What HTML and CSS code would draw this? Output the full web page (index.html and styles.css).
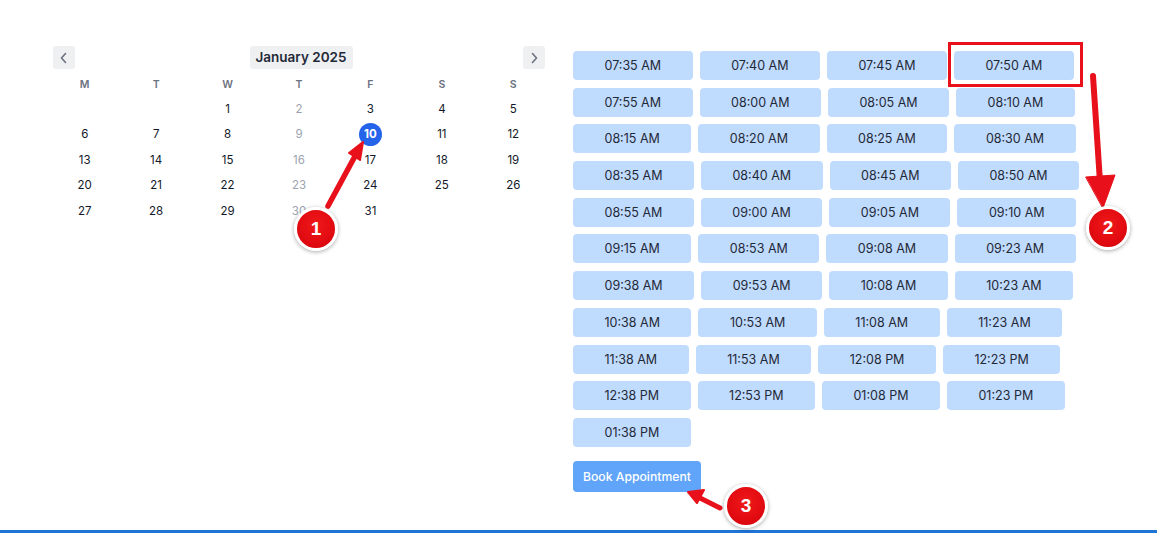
FILE: index.html
```html
<!DOCTYPE html>
<html>
<head>
<meta charset="utf-8">
<link rel="stylesheet" href="styles.css">
</head>
<body>
<div class="page">
  <div class="calendar">
    <div class="cal-nav">
      <button class="nav-btn" aria-label="Previous month">
        <svg width="10" height="12" viewBox="0 0 10 12"><path d="M6.5 1.5 L2.5 6 L6.5 10.5" fill="none" stroke="#6b7280" stroke-width="1.6" stroke-linecap="round" stroke-linejoin="round"/></svg>
      </button>
      <div class="cal-title">January 2025</div>
      <button class="nav-btn" aria-label="Next month">
        <svg width="10" height="12" viewBox="0 0 10 12"><path d="M3.5 1.5 L7.5 6 L3.5 10.5" fill="none" stroke="#6b7280" stroke-width="1.6" stroke-linecap="round" stroke-linejoin="round"/></svg>
      </button>
    </div>
    <div class="cal-grid">
      <div class="dow">M</div><div class="dow">T</div><div class="dow">W</div><div class="dow">T</div><div class="dow">F</div><div class="dow">S</div><div class="dow">S</div>
      <div class="day"></div><div class="day"></div><div class="day">1</div><div class="day off">2</div><div class="day">3</div><div class="day">4</div><div class="day">5</div>
      <div class="day">6</div><div class="day">7</div><div class="day">8</div><div class="day off">9</div><div class="day"><span class="sel">10</span></div><div class="day">11</div><div class="day">12</div>
      <div class="day">13</div><div class="day">14</div><div class="day">15</div><div class="day off">16</div><div class="day">17</div><div class="day">18</div><div class="day">19</div>
      <div class="day">20</div><div class="day">21</div><div class="day">22</div><div class="day off">23</div><div class="day">24</div><div class="day">25</div><div class="day">26</div>
      <div class="day">27</div><div class="day">28</div><div class="day">29</div><div class="day off">30</div><div class="day">31</div><div class="day"></div><div class="day"></div>
    </div>
  </div>
  <div class="slots-col">
    <div class="slots">
      <button class="slot">07:35 AM</button><button class="slot">07:40 AM</button><button class="slot">07:45 AM</button><button class="slot">07:50 AM</button>
      <button class="slot">07:55 AM</button><button class="slot">08:00 AM</button><button class="slot">08:05 AM</button><button class="slot">08:10 AM</button>
      <button class="slot">08:15 AM</button><button class="slot">08:20 AM</button><button class="slot">08:25 AM</button><button class="slot">08:30 AM</button>
      <button class="slot">08:35 AM</button><button class="slot">08:40 AM</button><button class="slot">08:45 AM</button><button class="slot">08:50 AM</button>
      <button class="slot">08:55 AM</button><button class="slot">09:00 AM</button><button class="slot">09:05 AM</button><button class="slot">09:10 AM</button>
      <button class="slot">09:15 AM</button><button class="slot">08:53 AM</button><button class="slot">09:08 AM</button><button class="slot">09:23 AM</button>
      <button class="slot">09:38 AM</button><button class="slot">09:53 AM</button><button class="slot">10:08 AM</button><button class="slot">10:23 AM</button>
      <button class="slot">10:38 AM</button><button class="slot">10:53 AM</button><button class="slot">11:08 AM</button><button class="slot">11:23 AM</button>
      <button class="slot">11:38 AM</button><button class="slot">11:53 AM</button><button class="slot">12:08 PM</button><button class="slot">12:23 PM</button>
      <button class="slot">12:38 PM</button><button class="slot">12:53 PM</button><button class="slot">01:08 PM</button><button class="slot">01:23 PM</button>
      <button class="slot">01:38 PM</button>
    </div>
    <button class="book">Book Appointment</button>
  </div>
</div>
<div class="bottom-line"></div>

<svg class="arrows" width="1157" height="533" viewBox="0 0 1157 533">
  <g fill="#e8101a" stroke="#e8101a" stroke-linecap="round">
    <line x1="328" y1="206" x2="354" y2="158" stroke-width="5.5"/>
    <polygon points="363,142 349,153 360,160" stroke-width="2" stroke-linejoin="round"/>
    <line x1="1093" y1="76" x2="1100" y2="182" stroke-width="6"/>
    <polygon points="1086,177 1115,175 1103,208" stroke-width="1" stroke-linejoin="round"/>
    <line x1="720" y1="508" x2="698" y2="497" stroke-width="5"/>
    <polygon points="688,492 704,490 697,503" stroke-width="2" stroke-linejoin="round"/>
  </g>
</svg>
<div class="highlight-box"></div>
<div class="badge b1">1</div>
<div class="badge b2">2</div>
<div class="badge b3">3</div>
</body>
</html>
```

FILE: styles.css
```css
* { box-sizing: border-box; }
html, body {
  margin: 0;
  padding: 0;
  background: #ffffff;
  font-family: Inter, "Noto Sans", "Liberation Sans", sans-serif;
  color: #1f2937;
}
body {
  width: 1157px;
  height: 533px;
  position: relative;
  overflow: hidden;
}
.page {
  display: flex;
  gap: 24px;
  padding: 46px 0 0 49px;
}
.calendar {
  width: 500px;
  flex: none;
}
.cal-nav {
  display: flex;
  align-items: center;
  justify-content: space-between;
  margin: 0 4px;
  height: 23px;
}
.nav-btn {
  width: 22px;
  height: 23px;
  border: none;
  border-radius: 3px;
  background: #eff0f2;
  padding: 0;
  display: flex;
  align-items: center;
  justify-content: center;
}
.cal-title {
  height: 23px;
  line-height: 23px;
  padding: 0 6px;
  background: #eff0f2;
  border-radius: 3px;
  font-size: 13.5px;
  font-weight: 600;
  color: #1f2937;
  margin-left: 4px;
}
.cal-grid {
  display: grid;
  grid-template-columns: repeat(7, 1fr);
  margin-top: 5px;
}
.dow {
  height: 22px;
  line-height: 22px;
  text-align: center;
  font-size: 10.5px;
  font-weight: 600;
  color: #6b7280;
}
.day {
  height: 25.5px;
  display: flex;
  align-items: center;
  justify-content: center;
  font-size: 11.5px;
  color: #111827;
}
.day.off { color: #9ca3af; }
.sel {
  width: 23px;
  height: 23px;
  border-radius: 50%;
  background: #2563eb;
  color: #ffffff;
  font-weight: 700;
  display: flex;
  align-items: center;
  justify-content: center;
}
.slots-col {
  padding-top: 5px;
  width: 512px;
}
.slots {
  display: flex;
  flex-wrap: wrap;
  gap: 7.7px 7px;
}
.slot {
  height: 29px;
  padding: 0 31.5px;
  border: none;
  border-radius: 4px;
  background: #bfdbfe;
  font-family: Inter, "Noto Sans", "Liberation Sans", sans-serif;
  font-size: 12.5px;
  color: #1f2937;
}
.book {
  margin-top: 14px;
  height: 31px;
  padding: 0 10px;
  border: none;
  border-radius: 4px;
  background: #60a5fa;
  color: #ffffff;
  font-family: Inter, "Noto Sans", "Liberation Sans", sans-serif;
  font-size: 12.2px;
  font-weight: 500;
}
.bottom-line {
  position: absolute;
  left: 0;
  right: 0;
  bottom: 0;
  height: 3px;
  background: #1f74d8;
}
.arrows {
  position: absolute;
  left: 0;
  top: 0;
  pointer-events: none;
}
.highlight-box {
  position: absolute;
  left: 948px;
  top: 42px;
  width: 135px;
  height: 45px;
  border: 3.5px solid #e8101a;
}
.badge {
  position: absolute;
  width: 44px;
  height: 44px;
  border-radius: 50%;
  background: radial-gradient(circle at 50% 40%, #f01a1a, #d6000b);
  border: 3px solid #ffffff;
  box-shadow: 0 1px 4px rgba(0,0,0,0.35);
  color: #ffffff;
  font-family: "Liberation Sans", Arial, sans-serif;
  font-weight: 700;
  font-size: 19px;
  display: flex;
  align-items: center;
  justify-content: center;
}
.b1 { left: 294px; top: 207px; }
.b2 { left: 1086px; top: 206px; }
.b3 { left: 724px; top: 484px; }
```
